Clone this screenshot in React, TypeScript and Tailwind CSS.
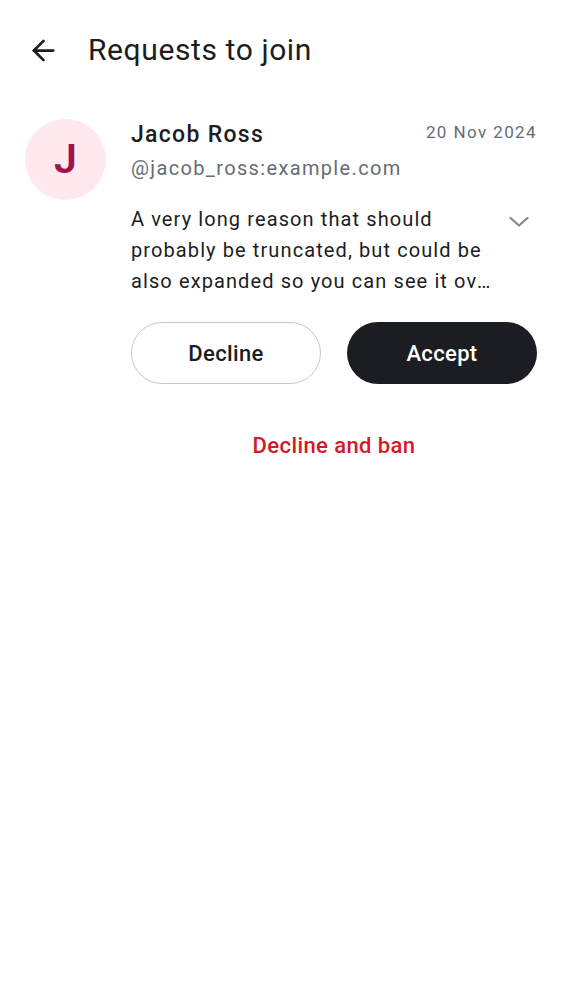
import { ArrowLeft } from "lucide-react";

const reason =
  "A very long reason that should probably be truncated, but could be also expanded so you can see it over the whole screen without any issue.";

function Avatar({ letter }: { letter: string }) {
  return (
    <div className="flex h-[81px] w-[81px] shrink-0 items-center justify-center rounded-full bg-[#ffe9ee]">
      <span className="text-[41px] font-semibold leading-none text-[#a1124f]">{letter}</span>
    </div>
  );
}

export default function App() {
  return (
    <div className="min-h-screen w-full bg-white font-['Roboto',sans-serif] text-[#1b1d22]">
      <div className="flex h-[100px] items-center">
        <button className="ml-[27px] flex h-[33px] w-[33px] items-center justify-center">
          <ArrowLeft size={33} strokeWidth={2} />
        </button>
        <h1 className="ml-[28px] text-[30px] leading-[30px] tracking-[0.6px]">
          {"Requests to join"}
        </h1>
      </div>

      <div className="flex gap-[25px] px-[25px] pt-[19px]">
        <Avatar letter="J" />
        <div className="flex min-w-0 flex-1 flex-col">
          <div className="flex items-start justify-between">
            <div className="flex flex-col">
              <span className="text-[23px] font-medium leading-[32px] tracking-[1.3px]">
                {"Jacob Ross"}
              </span>
              <span className="mt-[3px] text-[20px] leading-[28px] tracking-[1.35px] text-[#656d77]">
                {"@jacob_ross:example.com"}
              </span>
            </div>
            <span className="pt-[1px] text-[17px] leading-[24px] tracking-[1.4px] text-[#656d77]">
              {"20 Nov 2024"}
            </span>
          </div>

          <div className="mt-[22px] flex items-start justify-between">
            <p className="line-clamp-3 w-[366px] text-[20px] leading-[31px] tracking-[1.1px]">
              {reason}
            </p>
            <svg
              className="mr-[6px] mt-[5px]"
              width="24"
              height="24"
              viewBox="0 0 24 24"
              fill="none"
              stroke="#818a95"
              strokeWidth="2.3"
              strokeLinecap="round"
              strokeLinejoin="round"
            >
              <path d="M3.5 9l8.5 7.5 8.5-7.5" />
            </svg>
          </div>

          <div className="mt-[25px] grid grid-cols-2 gap-[26px]">
            <button className="h-[62px] rounded-full border border-[#c3c9d2] text-[22px] font-medium tracking-[0.35px]">
              {"Decline"}
            </button>
            <button className="h-[62px] rounded-full bg-[#1b1d22] text-[22px] font-medium tracking-[0.35px] text-white">
              {"Accept"}
            </button>
          </div>

          <button className="mt-[47px] self-center text-[22px] font-medium leading-[30px] tracking-[0.4px] text-[#d51928]">
            {"Decline and ban"}
          </button>
        </div>
      </div>
    </div>
  );
}
